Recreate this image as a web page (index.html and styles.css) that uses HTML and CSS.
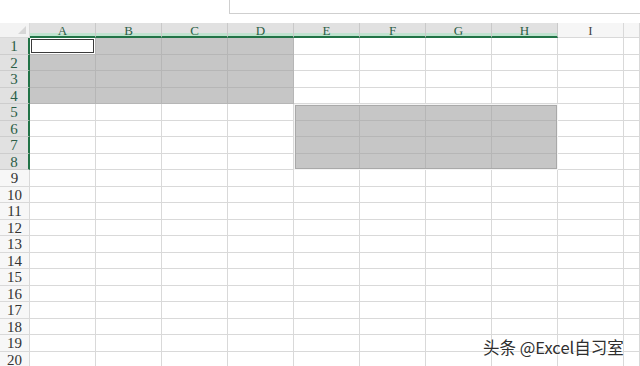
FILE: index.html
```html
<!DOCTYPE html>
<html lang="zh">

<head>
    <meta charset="UTF-8">
    <title>Excel</title>
    <link rel="stylesheet" href="styles.css">
</head>

<body>
    <div class="topbar">
        <div class="topbar-space"></div>
        <div class="formula-box"></div>
    </div>
    <div class="sheet">
        <div class="grid" id="grid"></div>
        <div class="range-box"></div>
        <div class="watermark">头条 @Excel自习室</div>
    </div>
    <script>
        // 表を作る
        const cols = ['A', 'B', 'C', 'D', 'E', 'F', 'G', 'H', 'I', ''];
        const grid = document.getElementById('grid');
        let html = '<div class="corner"></div>';
        cols.forEach((c, i) => {
            html += `<div class="col-head${i < 8 ? ' on' : ''}">${c}</div>`;
        });
        for (let r = 1; r <= 20; r++) {
            html += `<div class="row-head${r <= 8 ? ' on' : ''}">${r}</div>`;
            for (let c = 0; c < cols.length; c++) {
                let cls = 'cell';
                if (r <= 4 && c <= 3) cls += ' sel';
                if (r >= 5 && r <= 8 && c >= 4 && c <= 7) cls += ' sel';
                if (r == 1 && c == 0) cls = 'cell active';
                html += `<div class="${cls}"></div>`;
            }
        }
        grid.innerHTML = html;
    </script>
</body>

</html>
```
FILE: styles.css
```css
body {
    margin: 0;
    background: #fff;
    overflow: hidden;
    font-family: "Liberation Serif", serif;
}

.topbar {
    display: flex;
    height: 23px;
}

.topbar-space {
    width: 229px;
}

.formula-box {
    flex: 1;
    height: 13px;
    border-left: 1px solid #cfcfcf;
    border-bottom: 1px solid #cfcfcf;
}

.sheet {
    position: relative;
    width: 640px;
    height: 343px;
    overflow: hidden;
}

.grid {
    display: grid;
    grid-template-columns: 30px repeat(9, 66px) 16px;
    grid-template-rows: 15px repeat(20, 16.5px);
}

.grid > div {
    box-sizing: border-box;
    border-right: 1px solid #d9d9d9;
    border-bottom: 1px solid #d9d9d9;
}

.corner {
    position: relative;
    background: #f3f3f3;
}

.corner::after {
    content: "";
    position: absolute;
    right: 3px;
    bottom: 3px;
    border-left: 8px solid transparent;
    border-bottom: 8px solid #d6d6d6;
}

.col-head {
    background: #f6f6f6;
    color: #444;
    font-size: 13px;
    line-height: 15px;
    text-align: center;
}

.col-head.on {
    background: #e1e1e1;
    color: #2b5e46;
    border-right-color: #c9c9c9 !important;
    border-bottom: 2px solid #217346 !important;
    box-shadow: inset 0 -3px 0 #bfe3cf;
}

.row-head {
    background: #f7f7f7;
    color: #333;
    font-size: 15px;
    line-height: 17px;
    text-align: center;
    overflow: hidden;
}

.row-head.on {
    background: #e1e1e1;
    color: #2b5e46;
    border-right: 2px solid #217346 !important;
    border-bottom-color: #cdcdcd !important;
}

.cell.sel {
    background: #c6c6c6;
    border-right-color: #b6b6b6 !important;
    border-bottom-color: #b6b6b6 !important;
}

.cell.active {
    background: #fff;
    box-shadow: inset 0 0 0 1px #fff, inset 0 0 0 2px #3a3a3a;
    border-right-color: #b6b6b6 !important;
    border-bottom-color: #b6b6b6 !important;
}

/* 二つ目の選択範囲の枠 */
.range-box {
    position: absolute;
    left: 294px;
    top: 81px;
    width: 264px;
    height: 66px;
    box-sizing: border-box;
    border: 1px solid #f4f4f4;
    box-shadow: inset 0 0 0 1px #a9a9a9;
    pointer-events: none;
}

.watermark {
    position: absolute;
    left: 483px;
    top: 312px;
    font-family: "Noto Sans CJK SC", sans-serif;
    font-size: 16.5px;
    line-height: 24px;
    color: #2e2e2e;
    text-shadow: 0 0 2px #fff, 0 0 2px #fff;
}
```
